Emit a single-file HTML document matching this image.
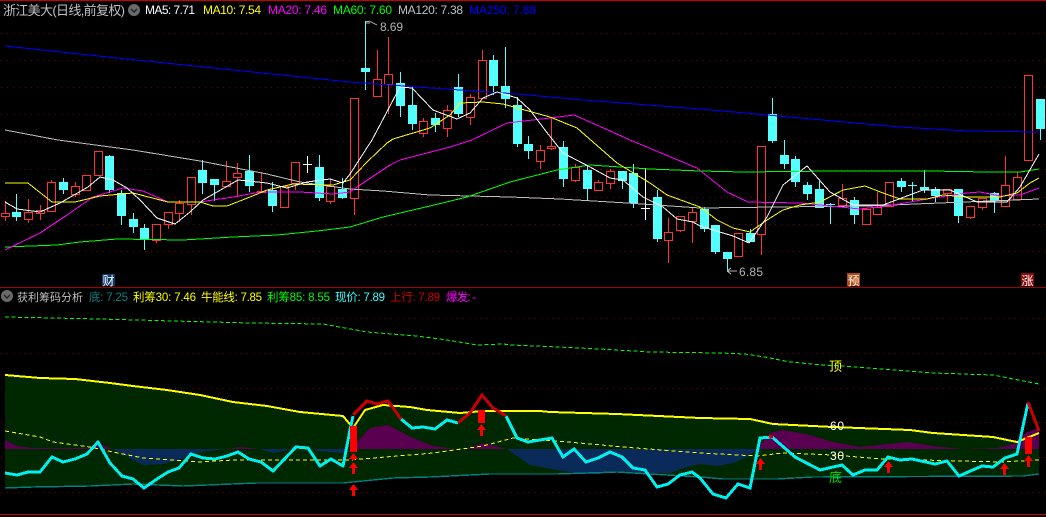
<!DOCTYPE html>
<html><head><meta charset="utf-8"><style>
html,body{margin:0;padding:0;background:#000;width:1046px;height:517px;overflow:hidden}
svg{display:block}
text{font-family:"Liberation Sans","WenQuanYi Zen Hei","Noto Sans CJK SC",sans-serif;font-size:12px}
.l{fill:none;shape-rendering:crispEdges}
.s text{font-size:11.5px}
</style></head><body>
<svg width="1046" height="517" viewBox="0 0 1046 517" xmlns="http://www.w3.org/2000/svg">
<rect width="1046" height="517" fill="#000"/>
<rect x="0" y="0" width="1046" height="1" fill="#c80000"/>
<rect x="0" y="287" width="1046" height="1" fill="#a00000"/>
<rect x="0" y="514" width="1046" height="1" fill="#c80000"/>
<path class="l" stroke="#7a0000" stroke-dasharray="1 5" d="M1 33.5H1046M1 60.5H1046M1 87.5H1046M1 114.5H1046M1 141.5H1046M1 169.5H1046M1 197.5H1046M1 224.5H1046M1 251.5H1046M1 318.5H1046M1 353.5H1046M1 388.5H1046M1 422.5H1046M1 457.5H1046M1 492.5H1046"/>

<!-- wicks -->
<path class="l" stroke="#ff3232" d="M5.5 201V221M28.5 199V223M40.5 205V220M51.5 180V211M75.5 182V197M86.5 175V190M98.5 151V176M156.5 224V243M168.5 212V229M179.5 200V222M191.5 177V215M226.5 161V186M237.5 163V197M261.5 172V192M284.5 186V207M295.5 162V190M330.5 179V204M354.5 98V215M377.5 50V96M388.5 37V114M423.5 118V137M447.5 105V137M470.5 94V125M482.5 50V98M540.5 145V169M551.5 119V150M575.5 164V182M598.5 180V190M610.5 169V189M668.5 218V263M680.5 216V232M692.5 208V243M738.5 233V256M761.5 146V255M842.5 184V205M866.5 209V224M877.5 192V215M889.5 182V206M947.5 189V203M970.5 206V219M982.5 198V210M1005.5 156V206M1017.5 172V199M1028.5 75V160"/>
<path class="l" stroke="#54ffff" d="M16.5 194V221M63.5 178V194M109.5 155V193M121.5 190V225M133.5 213V233M144.5 224V250M202.5 160V194M214.5 179V201M249.5 155V192M272.5 182V212M319.5 155V201M342.5 178V199M365.5 21V90M400.5 72V117M412.5 86V130M435.5 113V132M458.5 74V117M493.5 55V95M505.5 47V108M517.5 97V147M528.5 136V159M563.5 141V187M587.5 165V200M622.5 171V189M633.5 164V208M657.5 190V242M704.5 207V232M715.5 225V254M727.5 252V271M750.5 229V242M772.5 98V143M784.5 140V169M795.5 156V187M807.5 182V200M819.5 181V208M830.5 203V224M854.5 197V224M901.5 178V192M912.5 182V201M924.5 170V193M935.5 187V202M958.5 189V223M994.5 192V213M1040.5 99V140"/>
<path class="l" stroke="#ffffff" d="M307.5 156V173M645.5 169V220"/>
<!-- bodies -->
<path shape-rendering="crispEdges" style="fill:#000" stroke="#ff3232" d="M1.5 213.5h8v3h-8zM24.5 212.5h8v7h-8zM36.5 210.5h8v3h-8zM47.5 182.5h8v29h-8zM71.5 186.5h8v8h-8zM82.5 175.5h8v15h-8zM94.5 151.5h8v24h-8zM152.5 224.5h8v16h-8zM164.5 212.5h8v12h-8zM175.5 203.5h8v10h-8zM187.5 177.5h8v27h-8zM222.5 181.5h8v5h-8zM233.5 173.5h8v4h-8zM257.5 191.5h8v1h-8zM280.5 186.5h8v21h-8zM291.5 162.5h8v21h-8zM326.5 186.5h8v15h-8zM350.5 98.5h8v100h-8zM373.5 79.5h8v17h-8zM384.5 74.5h8v10h-8zM419.5 121.5h8v12h-8zM443.5 110.5h8v18h-8zM466.5 97.5h8v20h-8zM478.5 60.5h8v38h-8zM536.5 150.5h8v11h-8zM547.5 146.5h8v2h-8zM571.5 167.5h8v13h-8zM594.5 182.5h8v8h-8zM606.5 171.5h8v12h-8zM664.5 232.5h8v8h-8zM676.5 216.5h8v14h-8zM688.5 212.5h8v9h-8zM734.5 233.5h8v23h-8zM757.5 146.5h8v88h-8zM838.5 198.5h8v7h-8zM862.5 209.5h8v15h-8zM873.5 207.5h8v7h-8zM885.5 182.5h8v24h-8zM943.5 189.5h8v4h-8zM966.5 206.5h8v11h-8zM978.5 198.5h8v9h-8zM1001.5 185.5h8v21h-8zM1013.5 177.5h8v22h-8zM1024.5 75.5h8v85h-8z"/>
<path shape-rendering="crispEdges" fill="#54ffff" d="M12 212h9v5h-9zM59 182h9v8h-9zM105 156h9v34h-9zM117 193h9v23h-9zM129 219h9v8h-9zM140 228h9v12h-9zM198 170h9v13h-9zM210 179h9v6h-9zM245 171h9v15h-9zM268 190h9v16h-9zM315 167h9v31h-9zM338 189h9v9h-9zM361 68h9v4h-9zM396 83h9v23h-9zM408 105h9v19h-9zM431 118h9v7h-9zM454 87h9v27h-9zM489 60h9v26h-9zM501 86h9v13h-9zM513 105h9v39h-9zM524 144h9v7h-9zM559 147h9v32h-9zM583 170h9v19h-9zM618 171h9v10h-9zM629 173h9v30h-9zM653 197h9v42h-9zM700 209h9v20h-9zM711 225h9v27h-9zM723 252h9v7h-9zM746 233h9v9h-9zM768 114h9v27h-9zM780 155h9v9h-9zM791 159h9v23h-9zM803 185h9v9h-9zM815 189h9v19h-9zM826 204h9v1h-9zM850 200h9v15h-9zM897 181h9v6h-9zM908 185h9v1h-9zM920 187h9v3h-9zM931 189h9v7h-9zM954 189h9v27h-9zM990 193h9v8h-9zM1036 99h9v30h-9z"/>
<path class="l" stroke="#fff" d="M303 164.5h9M641 208.5h9"/>

<!-- MAs -->
<polyline class="l" stroke="#c0c0c0" points="5,130 58,140 133,150 200,161 267,174 300,182 350,189 383,191 430,195 510,197 560,199 627,203 700,208 777,207 867,206 940,203 1039,199"/>
<polyline class="l" stroke="#0000ff" points="5,46 117,58 233,70 350,82 417,87 517,94 583,100 700,109 767,115 833,121 900,127 967,131 1039,132"/>
<polyline class="l" stroke="#00ff00" points="5,247 57,245 80,242 117,239 183,240 233,237 277,235 317,231 350,227 383,217 430,206 467,197 510,182 557,170 590,165 650,169 700,171 743,172 833,171 930,171 987,172 1020,172 1039,169"/>
<polyline class="l" stroke="#ff00ff" points="5,250 40,233 67,215 93,197 123,188 143,191 168,202 200,202 233,197 260,192 300,192 333,194 350,192 357,187 390,165 400,160 450,147 472,140 507,123 550,118 574,115 608,130 630,140 697,168 727,192 748,202 800,203 820,205 860,209 887,206 933,198 967,193 980,192 1000,196 1020,195 1039,188"/>
<polyline class="l" stroke="#ffff00" points="5,183 28,183 52,202 75,202 100,196 133,193 168,202 200,202 213,206 227,206 250,197 267,190 293,184 333,185 350,180 367,162 387,143 393,139 430,128 450,115 460,103 483,102 503,104 550,117 577,128 617,163 650,183 667,195 700,207 717,220 733,228 750,232 767,220 783,210 800,205 820,202 843,190 865,186 883,193 900,199 927,199 943,195 967,197 1000,197 1017,193 1030,183 1039,178"/>
<polyline class="l" stroke="#ffffff" points="5,202 17,209 40,212 60,203 88,187 100,177 113,180 127,188 140,200 157,218 175,224 190,212 203,200 238,180 267,183 287,188 307,182 330,179 343,183 350,174 372,140 400,87 412,88 433,110 457,119 470,113 483,98 497,92 517,98 530,110 545,130 563,153 590,167 610,178 623,180 643,197 663,207 677,219 693,222 700,226 733,236 749,243 767,217 783,185 807,166 830,192 853,205 883,205 923,190 950,190 977,202 1007,202 1020,187 1039,154"/>

<!-- price labels -->
<path class="l" stroke="#b0b0b0" d="M366 21.5h3M369 21l8 4M366 23h4"/>
<text x="380" y="31" fill="#b4b4b4" textLength="23">8.69</text>
<path class="l" stroke="#b0b0b0" d="M727 271h10M727 271l4-3M727 271l4 3"/>
<text x="739" y="276" fill="#b4b4b4" textLength="24">6.85</text>

<!-- badges -->
<rect x="102" y="274" width="13" height="12" fill="#0f3a6a"/><text x="102.5" y="285" fill="#fff" style="font-size:12px">财</text>
<rect x="847" y="273" width="13" height="13" fill="#b04a10"/><text x="847.5" y="285" fill="#fff" style="font-size:12px">预</text>
<rect x="1021" y="273" width="13" height="13" fill="#8a0a0a"/><text x="1021.5" y="285" fill="#fff" style="font-size:12px">涨</text>

<!-- header -->
<text x="3" y="15" fill="#c0c0c0" textLength="122" style="font-size:13px">浙江美大(日线,前复权)</text>
<circle cx="134" cy="10" r="6" fill="#6a6a6a"/><path d="M131 9l3 3 3-3" fill="none" stroke="#222" stroke-width="1.4"/>
<text x="145" y="14" fill="#fff" textLength="50">MA5: 7.71</text>
<text x="203" y="14" fill="#ff0" textLength="58">MA10: 7.54</text>
<text x="268" y="14" fill="#f0f" textLength="59">MA20: 7.46</text>
<text x="333" y="14" fill="#0f0" textLength="59">MA60: 7.60</text>
<text x="398" y="14" fill="#c0c0c0" textLength="65">MA120: 7.38</text>
<text x="469" y="14" fill="#0000ff" textLength="67">MA250: 7.88</text>

<!-- lower panel fill -->
<polygon shape-rendering="crispEdges" fill="#002800" points="5,375 40,378 75,379 110,383 133,386 167,390 200,395 233,402 267,406 300,412 343,416 353,428 365,410 383,405 410,407 427,410 460,413 483,411 540,411 550,412 617,414 700,418 750,419 773,424 833,427 910,430 933,433 993,437 1017,442 1039,433 1039,474 1023,476 813,477 777,479 723,479 700,477 617,472 557,474 490,474 430,477 393,478 350,482 343,483 257,483 183,486 133,484 90,486 33,487 5,488"/>
<polygon shape-rendering="crispEdges" fill="#5a0050" points="5,440 17,446 33,448 87,448 98,443 107,447 113,449 5,449"/>
<polygon shape-rendering="crispEdges" fill="#5a0050" points="227,449 240,447 260,449"/>
<polygon shape-rendering="crispEdges" fill="#5a0050" points="350,449 357,442 370,428 388,425 413,438 433,446 457,449"/>
<polygon shape-rendering="crispEdges" fill="#5a0050" points="467,449 483,443 507,449"/>
<polygon shape-rendering="crispEdges" fill="#5a0050" points="757,449 770,433 783,430 810,435 833,442 860,447 880,445 907,442 933,446 963,449 997,448 1017,443 1025,433 1039,428 1039,449"/>
<polygon shape-rendering="crispEdges" fill="#0a2a5a" points="113,449 143,465 163,464 180,460 190,454 207,451 227,449"/>
<polygon shape-rendering="crispEdges" fill="#0a2a5a" points="260,449 273,453 293,449 "/>
<polygon shape-rendering="crispEdges" fill="#0a2a5a" points="312,449 317,451 343,453 346,449"/>
<polygon shape-rendering="crispEdges" fill="#0a2a5a" points="507,449 530,465 557,470 583,474 600,474 617,471 647,473 670,473 687,467 700,464 717,466 733,463 747,457 757,449"/>

<polyline class="l" stroke="#008080" stroke-width="1.4" points="5,488 33,487 90,486 133,484 183,486 257,483 343,483 393,478 430,477 490,474 557,474 617,472 700,477 723,479 777,479 813,477 1023,476 1039,474"/>
<polyline class="l" stroke="#ffff00" stroke-width="2" points="5,375 40,378 75,379 110,383 133,386 167,390 200,395 233,402 267,406 300,412 343,416 353,428 365,410 383,405 410,407 427,410 460,413 483,411 540,411 550,412 617,414 700,418 750,419 773,424 833,427 910,430 933,433 993,437 1017,442 1039,433"/>
<polyline class="l" stroke="#ffff00" stroke-dasharray="4 3" points="5,431 40,437 53,442 90,447 113,452 143,458 173,460 200,462 233,460 350,460 433,453 483,446 513,438 557,441 623,447 700,453 757,456 783,453 833,455 883,459 1000,462 1039,460"/>
<polyline class="l" stroke="#00ff00" stroke-dasharray="4 2.5" points="5,317 53,318 100,319 173,321 250,323 323,324 367,332 417,336 447,340 477,345 503,344 512,345 535,346 558,347 600,349 650,352 720,353 745,354 765,357 790,362 823,365 843,366 907,371 933,373 993,375 1039,384"/>

<!-- chip line -->
<polyline class="l" stroke="#00f0f0" stroke-width="3" stroke-linejoin="round" points="5,473 17,475 28,472 40,472 52,457 63,462 75,459 87,454 98,442 110,463 122,476 133,479 144,488 157,479 168,472 179,468 191,454 203,458 215,459 227,456 238,452 249,459 261,462 273,471 296,447 308,448 320,466 331,459 343,466 350,430 353,416"/>
<polyline class="l" stroke="#00f0f0" stroke-width="3" points="401,419 412,428 423,427 435,429 447,420 458,423"/>
<polyline class="l" stroke="#00f0f0" stroke-width="3" points="506,416 517,438 528,442 540,440 552,438 563,457 574,449 586,462 598,458 610,452 622,457 633,468 645,470 657,487 668,484 680,475 692,472 700,478 713,494 726,498 738,484 750,488 760,438 772,437 795,457 820,470 842,465 853,475 865,470 877,470 888,457 900,460 912,459 935,464 947,461 959,476 982,466 993,467 1005,458 1017,454 1028,403"/>
<polyline class="l" stroke="#c80000" stroke-width="3" points="353,415 367,401 377,404 388,401 401,419"/>
<polyline class="l" stroke="#c80000" stroke-width="3" points="458,423 470,413 482,395 493,408 506,416"/>
<polyline class="l" stroke="#c80000" stroke-width="3" points="769,436 773,437"/>
<polyline class="l" stroke="#c80000" stroke-width="3" points="1028,402 1039,431"/>

<!-- signal bars + arrows -->
<g shape-rendering="crispEdges" fill="#ff0000">
<rect x="350" y="426" width="7" height="26"/><rect x="478" y="410" width="7" height="13"/><rect x="1025" y="437" width="7" height="17"/>
<path d="M353.5 453l4.5 6h-3v1h-3v-1h-3zM353.5 462l4.5 6h-3v6h-3v-6h-3zM353.5 484l4.5 6h-3v6h-3v-6h-3zM481.5 424l4.5 6h-3v6h-3v-6h-3zM760.5 458l4.5 6h-3v6h-3v-6h-3zM888.5 461l4.5 6h-3v6h-3v-6h-3zM1004.5 463l4.5 6h-3v6h-3v-6h-3zM1028.5 455l4.5 6h-3v6h-3v-6h-3z"/>
</g>

<!-- level labels -->
<text x="829" y="371" fill="#ffff00" style="font-size:13px">顶</text>
<text x="830" y="430" fill="#fff" textLength="14">60</text>
<text x="830" y="460" fill="#fff" textLength="14">30</text>
<text x="829" y="482" fill="#00e000" style="font-size:13px">底</text>

<!-- lower header -->
<circle cx="7" cy="296" r="6" fill="#6a6a6a"/><path d="M4 295l3 3 3-3" fill="none" stroke="#222" stroke-width="1.4"/>
<text x="17" y="301" fill="#c0c0c0" textLength="66" style="font-size:11px">获利筹码分析</text>
<g class="s">
<text x="89" y="301" fill="#0a8080" textLength="39">底: 7.25</text>
<text x="133" y="301" fill="#ffff00" textLength="63">利筹30: 7.46</text>
<text x="201" y="301" fill="#ffff00" textLength="61">牛能线: 7.85</text>
<text x="267" y="301" fill="#00ff00" textLength="63">利筹85: 8.55</text>
<text x="335" y="301" fill="#30ffff" textLength="50">现价: 7.89</text>
<text x="390" y="301" fill="#d00000" textLength="50">上行: 7.89</text>
<text x="446" y="301" fill="#ff00ff" textLength="30">爆发: -</text>
</g>
</svg>
</body></html>
